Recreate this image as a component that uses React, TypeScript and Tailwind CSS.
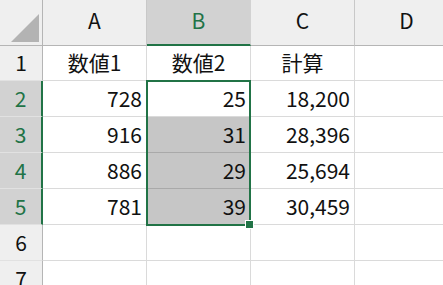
const font = { fontFamily: '"Noto Sans CJK JP", "Noto Sans", sans-serif' }

const rows = [
  { n: 1, a: '数値1', b: '数値2', c: '計算', head: true },
  { n: 2, a: '728', b: '25', c: '18,200' },
  { n: 3, a: '916', b: '31', c: '28,396' },
  { n: 4, a: '886', b: '29', c: '25,694' },
  { n: 5, a: '781', b: '39', c: '30,459' },
  { n: 6, a: '', b: '', c: '' },
  { n: 7, a: '', b: '', c: '' },
]

const selected = [2, 3, 4, 5]

export default function App() {
  return (
    <div className="relative w-[443px] h-[285px] overflow-hidden bg-white text-[21px] text-[#111]" style={font}>
      <div className="grid grid-cols-[43px_104px_104px_104px_104px] grid-rows-[46px_35px_repeat(6,36px)]">
        {/* corner */}
        <div className="relative bg-[#efefef] border-r border-b border-[#b5b5b5]">
          <svg className="absolute left-0 top-0" width="42" height="45">
            <polygon points="11,42 39,42 39,14" fill="#b3b3b3" />
          </svg>
        </div>
        {['A', 'B', 'C', 'D'].map(h =>
          h === 'B' ? (
            <div key={h} className="flex items-end justify-center pb-[8px] bg-[#d2d2d2] border-b-2 border-[#217346] text-[#217346] border-r border-r-[#d2d2d2]">
              {h}
            </div>
          ) : (
            <div key={h} className="flex items-end justify-center pb-[9px] bg-[#efefef] border-r border-r-[#c8c8c8] border-b border-b-[#b5b5b5]">
              {h}
            </div>
          )
        )}

        {rows.map(r => {
          const sel = selected.includes(r.n)
          const shaded = sel && r.n > 2
          return [
            <div
              key={`h${r.n}`}
              className={
                sel
                  ? 'flex items-center justify-center bg-[#d2d2d2] text-[#217346] border-b border-b-[#e1e1e1] border-r-2 border-r-[#217346]'
                  : 'flex items-center justify-center bg-[#efefef] border-b border-b-[#e1e1e1] border-r border-r-[#b5b5b5]'
              }
            >
              {r.n}
            </div>,
            <div
              key={`a${r.n}`}
              className={`flex items-center border-r border-b border-[#dadada] ${r.head ? 'justify-center' : 'justify-end pr-[4px]'}`}
            >
              {r.a}
            </div>,
            <div
              key={`b${r.n}`}
              className={`flex items-center border-r border-b ${shaded ? 'bg-[#c6c6c6] border-[#a9a9a9]' : 'border-[#dadada]'} ${r.head ? 'justify-center' : 'justify-end pr-[4px]'}`}
            >
              {r.b}
            </div>,
            <div
              key={`c${r.n}`}
              className={`flex items-center border-r border-b border-[#dadada] ${r.head ? 'justify-center' : 'justify-end pr-[4px]'}`}
            >
              {r.c}
            </div>,
            <div key={`d${r.n}`} className="border-r border-b border-[#dadada]" />,
          ]
        })}
      </div>

      {/* selection B2:B5 */}
      <div className="absolute left-[146px] top-[80px] w-[105px] h-[146px] border-2 border-[#217346]" />
      <div className="absolute left-[245px] top-[220px] w-[9px] h-[9px] bg-[#217346] border border-white" />
    </div>
  )
}
